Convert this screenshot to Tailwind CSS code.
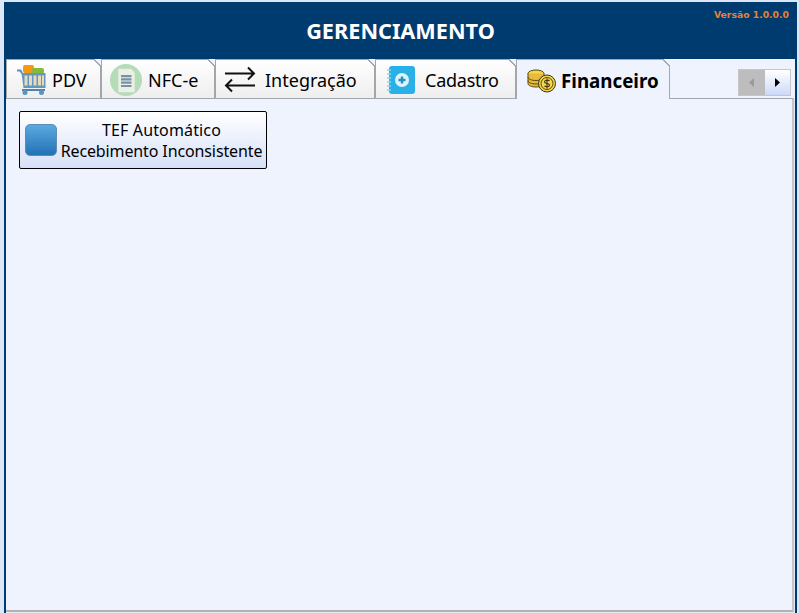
<!DOCTYPE html>
<html lang="pt">
<head>
<meta charset="utf-8">
<script src="https://cdn.jsdelivr.net/npm/@tailwindcss/browser@4"></script>
</head>
<body class="m-0 h-[613px] w-[799px] overflow-hidden bg-[#dce8f8] font-['Noto_Sans','DejaVu_Sans',sans-serif] text-black">
<div class="mt-[2px] ml-[4px] flex h-[611px] w-[793px] flex-col">
  <header class="relative flex h-[57px] shrink-0 items-center justify-center bg-[#003b70] pt-[1px]">
    <h1 class="text-[21.7px] leading-none font-bold text-white">GERENCIAMENTO</h1>
    <span class="absolute top-[7px] right-[8px] font-['DejaVu_Sans',sans-serif] text-[9.25px] leading-[12px] font-bold text-[#e8802f]">Versão 1.0.0.0</span>
  </header>
  <div class="flex min-h-0 flex-1 border-l-2 border-r-2 border-[#003b70]">
    <div class="flex min-w-0 flex-1 flex-col bg-[#eef3fe]">
      <div class="relative z-10 flex h-[40px] shrink-0 items-start">
        <!-- PDV -->
        <div class="relative flex h-[39px] w-[95px] shrink-0 items-center gap-[4px] border-x border-t border-[#a3a6ab] bg-gradient-to-b from-white to-[#eeeeee] pt-[1px] pl-[10px]">
          <svg width="31" height="30" viewBox="0 0 31 30" class="shrink-0">
            <rect x="6" y="0" width="11" height="8" rx="2" fill="#f39a12"/>
            <rect x="15" y="3" width="12" height="6" rx="2" fill="#84bb3a"/>
            <path d="M0 5.500h3.500l1.500 3" fill="none" stroke="#5f8fb5" stroke-width="2"/>
            <path d="M4.500 8h24v15H6.500z" fill="#6596bd"/>
            <path d="M7.500 10.500h3v10h-3zM12 10.500h3v10h-3zM16.500 10.500h3v10h-3zM21 10.500h3v10h-3zM25 10.500h2v10h-2z" fill="#e3dcc0"/>
            <path d="M5 24h23v2H5z" fill="#4e83ad"/>
            <circle cx="8" cy="27.500" r="2.500" fill="#5f93bb"/><circle cx="24.500" cy="27.500" r="2.500" fill="#5f93bb"/>
          </svg>
          <span class="text-[18px] leading-none">PDV</span>
          <span class="absolute -top-px -right-px h-[8px] w-[8px] bg-[linear-gradient(45deg,transparent_45%,#a3a6ab_45%,#a3a6ab_58%,#eef3fe_58%)]"></span>
        </div>
        <!-- NFC-e -->
        <div class="relative flex h-[39px] w-[114px] shrink-0 items-center gap-[6px] border-x border-t border-[#a3a6ab] bg-gradient-to-b from-white to-[#eeeeee] pt-[1px] pl-[8px]">
          <svg width="32" height="32" viewBox="0 0 32 32" class="shrink-0">
            <circle cx="16" cy="16" r="16" fill="#b3dcb7"/>
            <path d="M8 4.500h13l4 4v20H8z" fill="#e9f1e4" stroke="#c6d6c5" stroke-width=".7"/>
            <path d="M11 11h10.500v2.200H11zM11 14.300h10.500v2.200H11zM11 17.600h10.500v2.200H11zM11 20.900h10.500v2.200H11z" fill="#7a90a8"/>
          </svg>
          <span class="text-[18px] leading-none">NFC-e</span>
          <span class="absolute -top-px -right-px h-[8px] w-[8px] bg-[linear-gradient(45deg,transparent_45%,#a3a6ab_45%,#a3a6ab_58%,#eef3fe_58%)]"></span>
        </div>
        <!-- Integração -->
        <div class="relative flex h-[39px] w-[160px] shrink-0 items-center gap-[9px] border-x border-t border-[#a3a6ab] bg-gradient-to-b from-white to-[#eeeeee] pt-[1px] pl-[8px]">
          <svg width="32" height="28" viewBox="0 0 32 28" class="shrink-0">
            <path d="M1 7.500h29M24 1.500l6 6-6 6M31 19.500H2M8 13.500l-6 6 6 6" fill="none" stroke="#111" stroke-width="2"/>
          </svg>
          <span class="text-[18px] leading-none">Integração</span>
          <span class="absolute -top-px -right-px h-[8px] w-[8px] bg-[linear-gradient(45deg,transparent_45%,#a3a6ab_45%,#a3a6ab_58%,#eef3fe_58%)]"></span>
        </div>
        <!-- Cadastro -->
        <div class="relative flex h-[39px] w-[141px] shrink-0 items-center gap-[10px] border-x border-t border-[#a3a6ab] bg-gradient-to-b from-white to-[#eeeeee] pt-[1px] pl-[11px]">
          <svg width="28" height="28" viewBox="0 0 28 28" class="shrink-0">
            <rect x="2" y="0" width="26" height="28" rx="3" fill="#29b0e6"/>
            <path d="M0 4h4M0 8h4M0 12h4M0 16h4M0 20h4M0 24h4" stroke="#8fd6f1" stroke-width="1.500"/>
            <circle cx="15" cy="14" r="7" fill="#dff3fb"/>
            <path d="M11.500 14h7M15 10.500v7" stroke="#1f8fc4" stroke-width="2.400"/>
          </svg>
          <span class="text-[18px] leading-none tracking-[-0.25px]">Cadastro</span>
          <span class="absolute -top-px -right-px h-[8px] w-[8px] bg-[linear-gradient(45deg,transparent_45%,#a3a6ab_45%,#a3a6ab_58%,#eef3fe_58%)]"></span>
        </div>
        <!-- Financeiro -->
        <div class="relative flex h-[40px] w-[154px] shrink-0 items-center gap-[5px] border-x border-t border-[#a3a6ab] bg-[#eef3fe] pt-[3px] pl-[10px]">
          <svg width="29" height="24" viewBox="0 0 29 24" class="shrink-0">
            <ellipse cx="9" cy="4.500" rx="8" ry="3.500" fill="#f5d64a" stroke="#57480f"/>
            <path d="M1 4.500v10c0 2 3.500 3.500 8 3.500s8-1.500 8-3.500v-10" fill="#e8b93a" stroke="#57480f"/>
            <path d="M1 8c0 2 3.500 3.500 8 3.500s8-1.500 8-3.500M1 11.500c0 2 3.500 3.500 8 3.500s8-1.500 8-3.500" fill="none" stroke="#57480f"/>
            <circle cx="20" cy="14.500" r="8.500" fill="#f5d64a" stroke="#3b3410"/>
            <circle cx="20" cy="14.500" r="6" fill="none" stroke="#57480f"/>
            <path d="M22.500 12c-1-1.200-5-1.200-5 .8 0 2.400 5 1 5 3.400 0 2-4 2-5 .7M20 9.500v10" fill="none" stroke="#3b3410" stroke-width="1.100"/>
          </svg>
          <span class="text-[18.75px] leading-none font-bold">Financeiro</span>
          <span class="absolute -top-px -right-px h-[8px] w-[8px] bg-[linear-gradient(45deg,transparent_45%,#a3a6ab_45%,#a3a6ab_58%,#eef3fe_58%)]"></span>
        </div>
        <!-- Scroll -->
        <div class="absolute top-[10px] left-[732px] flex h-[27px] w-[53px] border border-[#c6c6c6]">
          <div class="flex flex-1 items-center justify-center bg-[#bdbdbd]">
            <svg width="5" height="9" viewBox="0 0 5 9"><path d="M5 0v9L0 4.500z" fill="#9a9a9a"/></svg>
          </div>
          <div class="flex flex-1 items-center justify-center bg-gradient-to-b from-white to-[#cdd9f7]">
            <svg width="5" height="9" viewBox="0 0 5 9"><path d="M0 0v9l5-4.500z" fill="#000"/></svg>
          </div>
        </div>
      </div>
      <main class="-mt-px mr-[1px] mb-[1px] min-h-0 flex-1 border-t border-r-2 border-b-2 border-[#a3a6ab] border-r-[#c4c6ca] border-b-[#b0b2b5] bg-[#eef3fe] pt-[12px] pl-[13px] shadow-[1px_1px_0_#e4e8f0]">
        <button class="flex h-[58px] w-[248px] items-center rounded-[2px] border border-black bg-gradient-to-b from-white to-[#d6e0f8] pl-[5px] text-[16px] leading-[21px]">
          <span class="h-[32px] w-[32px] shrink-0 rounded-[5px] border border-[#5d8db5] bg-gradient-to-b from-[#5aa9e0] to-[#2272b5]"></span>
          <span class="flex-1 pt-[2px] text-center whitespace-nowrap"><span class="tracking-[0.14px]">TEF Automático</span><br><span class="tracking-[-0.12px]">Recebimento Inconsistente</span></span>
        </button>
      </main>
    </div>
  </div>
</div>
</body>
</html>
